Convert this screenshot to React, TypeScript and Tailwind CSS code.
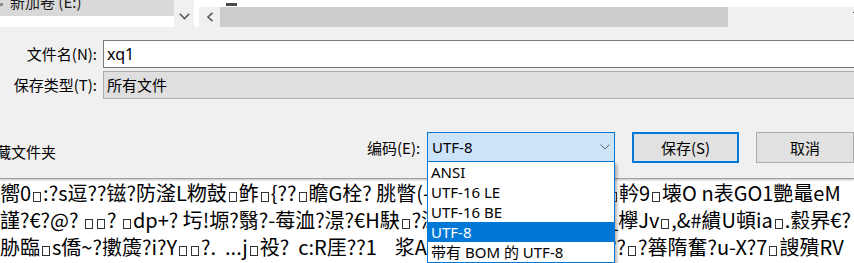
import React from "react";

const Box = () => (
  <span className="inline-block w-[8px] h-[10px] border border-[#333] mx-[2px] align-[-1px]" />
);

function Garble({ s }: { s: string }) {
  const parts = s.split("□");
  return (
    <>
      {parts.map((p, i) => (
        <React.Fragment key={i}>
          {i > 0 && <Box />}
          {p}
        </React.Fragment>
      ))}
    </>
  );
}

const lines: [string, string][] = [
  ["嚮0□:?s逗??镃?防滏L粅鼓□鲊□{??□瞻G栓? 朓瞥(-掀?□軡", "□軡9□壊O n表GO1艷鼂eM"],
  ["謹?€?@? □□? □dp+? 圬!塬?翳?-莓洫?澋?€H駃□?灀?", "_欅Jv□,&#繢U頓ia□.縠昦€?"],
  ["胁臨□s僑~?擻簴?i?Y□□?.  ...j□祋?  c:R厓??1    浆A?", "??□?簭隋奮?u-X?7□謏殨RV"],
  ["  '  ˙     ` ?  □  ,  ′", "  ' ?  ` "],
];

const cjk = "font-['Noto_Sans_CJK_SC','Noto_Sans',sans-serif]";
const ui = "font-['Noto_Sans','Noto_Sans_CJK_SC',sans-serif]";

export default function App() {
  return (
    <div className={`relative w-[854px] h-[263px] overflow-hidden bg-white text-black ${cjk}`}>
      {/* dialog */}
      <div className="relative z-10 h-[179px] bg-[#f0f0f0] border-b border-[#a0a0a0] shadow-[0_1px_2px_rgba(0,0,0,0.25)]">
        {/* top strip */}
        <div className="flex h-[27px]">
          <div className="w-[174px] flex flex-col bg-white">
            <div className="h-[16px] bg-[#d9d9d9] overflow-hidden flex">
              <span className="w-[3px] h-[3px] mt-[3px] bg-[#8a8a8a]" />
              <span className="ml-[7px] -mt-[8px] text-[15px] leading-[20px] text-[#1a1a1a] whitespace-nowrap">
                新加卷 (E:)
              </span>
            </div>
          </div>
          <div className="w-[20px] bg-[#f0f0f0] flex justify-center pt-[13px]">
            <svg width="11" height="7" viewBox="0 0 11 7">
              <path d="M0.8 0.8 L5.5 5.5 L10.2 0.8" fill="none" stroke="#5a5a5a" strokeWidth="1.6" />
            </svg>
          </div>
          <div className="w-[5px] bg-white" />
          <div className="flex-1 flex flex-col">
            <div className="h-[7px] bg-white flex">
              <span className="ml-[27px] mt-[3px] w-[11px] h-[3px] bg-[#4a4a4a]" />
            </div>
            <div className="h-[20px] flex">
              <div className="w-[21px] bg-[#f0f0f0] flex justify-center items-center">
                <svg width="8" height="10" viewBox="0 0 8 10">
                  <path d="M6.5 0.8 L2 5 L6.5 9.2" fill="none" stroke="#5a5a5a" strokeWidth="1.6" />
                </svg>
              </div>
              <div className="w-[508px] bg-[#cdcdcd]" />
              <div className="flex-1 bg-[#f0f0f0] flex justify-end">
                <span className="mt-[5px] w-[1px] h-[1px] bg-[#444]" />
              </div>
            </div>
          </div>
        </div>

        {/* fields */}
        <div className="pt-[13px] flex flex-col gap-[3px] text-[15px]">
          <div className="flex items-center">
            <div className="w-[97px] text-right leading-[20px] whitespace-nowrap">文件名(N):</div>
            <div className="ml-[6px] flex-1 h-[28px] bg-white border border-r-0 border-[#7a7a7a] pl-[3px] flex items-center">
              <span className={`${ui} text-[16px] leading-[20px]`}>xq1</span>
            </div>
          </div>
          <div className="flex items-center">
            <div className="w-[97px] text-right leading-[20px] whitespace-nowrap">保存类型(T):</div>
            <div className="ml-[6px] flex-1 h-[28px] bg-[#dfdfdf] border border-r-0 border-[#adadad] pl-[3px] flex items-center leading-[20px]">
              所有文件
            </div>
          </div>
        </div>

        {/* bottom row */}
        <div className="mt-[33px] flex items-start text-[15px]">
          <div className="w-[367px] mt-[10px] leading-[20px] whitespace-nowrap">
            <span className="-ml-[4px]">藏文件夹</span>
          </div>
          <div className="w-[51px] mt-[6px] leading-[20px] whitespace-nowrap">编码(E):</div>
          <div className="ml-[9px] relative w-[188px] h-[30px] bg-[#cce4f7] border border-[#0078d7] flex items-center justify-between pl-[4px] pr-[4px]">
            <span className={`${ui} leading-[20px] -mt-[1px]`}>UTF-8</span>
            <svg width="10" height="6" viewBox="0 0 10 6" className="-mt-[1px]">
              <path d="M0.5 0.5 L5 5 L9.5 0.5" fill="none" stroke="#606060" strokeWidth="1" />
            </svg>
            <div className="absolute left-[-1px] top-[29px] w-[188px] bg-white border border-[#0078d7] border-t-0 shadow-[2px_2px_3px_rgba(0,0,0,0.3)] flex flex-col">
              {["ANSI", "UTF-16 LE", "UTF-16 BE", "UTF-8", "带有 BOM 的 UTF-8"].map((t) => (
                <div
                  key={t}
                  className={`h-[20px] pl-[3px] leading-[20px] whitespace-nowrap ${ui} ${
                    t === "UTF-8" ? "bg-[#0078d7] text-white" : ""
                  }`}
                >
                  {t === "带有 BOM 的 UTF-8" ? (
                    <>
                      <span className={cjk}>带有</span> BOM <span className={cjk}>的</span> UTF-8
                    </>
                  ) : (
                    t
                  )}
                </div>
              ))}
            </div>
          </div>
          <div className="ml-[17px] w-[107px] h-[31px] bg-[#e1e1e1] border-2 border-[#0078d7] flex items-center justify-center leading-[20px]">
            保存(S)
          </div>
          <div className="ml-[17px] w-[98px] h-[31px] bg-[#e1e1e1] border border-[#adadad] flex items-center justify-center leading-[20px]">
            取消
          </div>
        </div>
      </div>

      {/* notepad text */}
      <div className="flex flex-col text-[20px] leading-[27px] whitespace-pre">
        {lines.map(([l, r], i) => (
          <div key={i} className="flex h-[27px] shrink-0">
            <div className="w-[614px] shrink-0 overflow-hidden">
              <Garble s={l} />
            </div>
            <div className="flex-1 overflow-hidden">
              <div className="-ml-[7px]">
                <Garble s={r} />
              </div>
            </div>
          </div>
        ))}
      </div>
    </div>
  );
}
